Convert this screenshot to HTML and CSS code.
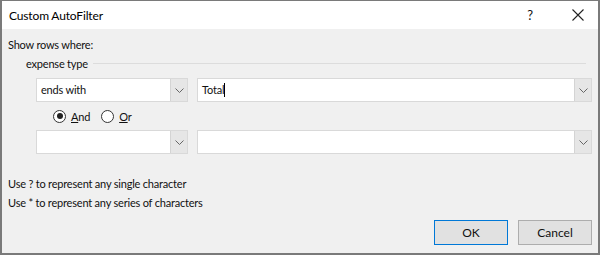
FILE: index.html
```html
<!DOCTYPE html>
<html lang="en">
<head>
    <meta charset="UTF-8">
    <title>Custom AutoFilter</title>
    <link rel="stylesheet" href="styles.css">
</head>
<body>
    <div class="dialog">
        <div class="titlebar">
            <span class="title">Custom AutoFilter</span>
            <span class="help">?</span>
            <span class="close">
                <svg width="12" height="12" viewBox="0 0 12 12"><path d="M0.5 0.5 L11.5 11.5 M11.5 0.5 L0.5 11.5" stroke="#222" stroke-width="1.1" fill="none"/></svg>
            </span>
        </div>
        <div class="content">
            <div class="caption">Show rows where:</div>
            <div class="group">
                <span class="group-label">expense type</span>
                <span class="group-line"></span>
            </div>

            <div class="row first">
                <div class="combo op">
                    <span class="combo-text">ends with</span>
                    <span class="combo-btn"><svg width="9" height="5" viewBox="0 0 9 5"><path d="M0.5 0.5 L4.5 4.5 L8.5 0.5" stroke="#666" fill="none"/></svg></span>
                </div>
                <div class="combo val">
                    <span class="combo-text">Total<span class="caret"></span></span>
                    <span class="combo-btn"><svg width="9" height="5" viewBox="0 0 9 5"><path d="M0.5 0.5 L4.5 4.5 L8.5 0.5" stroke="#666" fill="none"/></svg></span>
                </div>
            </div>

            <div class="radios">
                <label class="radio"><span class="dot checked"></span><span><u>A</u>nd</span></label>
                <label class="radio"><span class="dot"></span><span><u>O</u>r</span></label>
            </div>

            <div class="row">
                <div class="combo op">
                    <span class="combo-text"></span>
                    <span class="combo-btn"><svg width="9" height="5" viewBox="0 0 9 5"><path d="M0.5 0.5 L4.5 4.5 L8.5 0.5" stroke="#666" fill="none"/></svg></span>
                </div>
                <div class="combo val">
                    <span class="combo-text"></span>
                    <span class="combo-btn"><svg width="9" height="5" viewBox="0 0 9 5"><path d="M0.5 0.5 L4.5 4.5 L8.5 0.5" stroke="#666" fill="none"/></svg></span>
                </div>
            </div>

            <div class="hints">
                <div>Use ? to represent any single character</div>
                <div>Use * to represent any series of characters</div>
            </div>

            <div class="buttons">
                <button class="btn default">OK</button>
                <button class="btn">Cancel</button>
            </div>
        </div>
    </div>
</body>
</html>
```

FILE: styles.css
```css
html, body {
    margin: 0;
    padding: 0;
}
body {
    width: 600px;
    height: 255px;
    font-family: Lato, "Noto Sans", sans-serif;
    font-size: 11px;
    letter-spacing: -0.2px;
    color: #111;
    background: #888;
}
.dialog {
    box-sizing: border-box;
    width: 600px;
    height: 255px;
    border: 1px solid #7a7a7a;
    border-width: 1px 2px 2px 2px;
    background: #f0f0f0;
    display: flex;
    flex-direction: column;
}
.titlebar {
    height: 28px;
    background: #fff;
    display: flex;
    align-items: center;
    flex-shrink: 0;
}
.title {
    font-size: 12px;
    letter-spacing: -0.15px;
    padding-left: 7px;
    flex: 1;
    color: #000;
}
.help {
    font-size: 13px;
    width: 20px;
    text-align: center;
    margin-right: 28px;
}
.close {
    width: 20px;
    display: flex;
    justify-content: center;
    margin-right: 10px;
}
.content {
    flex: 1;
    padding: 6px 6px 0 6px;
    display: flex;
    flex-direction: column;
}
.caption {
    height: 20px;
    line-height: 20px;
}
.group {
    display: flex;
    align-items: center;
    padding-left: 18px;
    height: 16px;
    margin-right: 6px;
}
.group-label {
    padding-right: 5px;
}
.group-line {
    flex: 1;
    border-top: 1px solid #dcdcdc;
}
.row {
    display: flex;
    gap: 9px;
    padding-left: 28px;
    height: 24px;
}
.row.first {
    margin-top: 7px;
}
.combo {
    display: flex;
    box-sizing: border-box;
    height: 24px;
    border: 1px solid #d9d9d9;
    background: #fff;
}
.combo.op {
    width: 152px;
}
.combo.val {
    flex: 1;
}
.combo-text {
    flex: 1;
    padding-left: 4px;
    line-height: 22px;
}
.combo-btn {
    width: 16px;
    background: #e6e6e6;
    border-left: 1px solid #d4d4d4;
    display: flex;
    align-items: center;
    justify-content: center;
}
.caret {
    display: inline-block;
    width: 1px;
    height: 14px;
    background: #000;
    vertical-align: -3px;
}
.radios {
    display: flex;
    gap: 11px;
    padding-left: 45px;
    height: 28px;
    align-items: center;
}
.radio {
    display: flex;
    align-items: center;
    gap: 5px;
}
.dot {
    box-sizing: border-box;
    width: 13px;
    height: 13px;
    border: 1px solid #333;
    border-radius: 50%;
    background: #fff;
    position: relative;
}
.dot.checked::after {
    content: "";
    position: absolute;
    left: 2.5px;
    top: 2.5px;
    width: 6px;
    height: 6px;
    border-radius: 50%;
    background: #222;
}
.hints {
    margin-top: 20px;
    line-height: 19px;
}
.buttons {
    margin-top: 8px;
    display: flex;
    justify-content: flex-end;
    gap: 10px;
}
.btn {
    box-sizing: border-box;
    width: 74px;
    height: 25px;
    font-family: inherit;
    font-size: 12px;
    color: #111;
    background: #e1e1e1;
    border: 1px solid #adadad;
}
.btn.default {
    border-color: #0078d7;
}
```
